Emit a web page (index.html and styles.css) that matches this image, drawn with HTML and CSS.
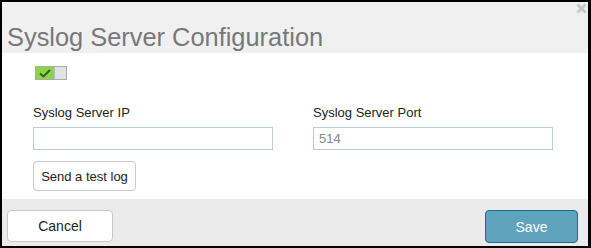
FILE: index.html
```html
<!DOCTYPE html>
<html>
<head>
  <link rel="stylesheet" href="styles.css">
</head>
<body class="body">
<div class="dialog">
  <div class="dialog-header">
    <span class="dialog-title">Syslog Server Configuration</span>
    <svg class="close" width="11" height="11" viewBox="0 0 11 11"><path d="M1.5 1.5 L9.5 9.5 M9.5 1.5 L1.5 9.5" stroke="#C8C8C8" stroke-width="3"/></svg>
  </div>
  <div class="dialog-body">
    <div class="toggle">
      <span class="toggle-on">
        <svg width="12" height="9" viewBox="0 0 12 9"><path d="M1 4.5 L4.5 7.5 L11 1" fill="none" stroke="#3a5a28" stroke-width="2"/></svg>
      </span>
      <span class="toggle-off"></span>
    </div>
    <div class="fields">
      <div class="field">
        <label class="label">Syslog Server IP</label>
        <input class="textbox" type="text">
      </div>
      <div class="field">
        <label class="label">Syslog Server Port</label>
        <input class="textbox" type="text" placeholder="514">
      </div>
    </div>
    <button class="btn btn-test">Send a test log</button>
  </div>
  <div class="dialog-footer">
    <button class="btn btn-cancel">Cancel</button>
    <button class="btn btn-save">Save</button>
  </div>
</div>
</body>
</html>
```

FILE: styles.css
```css
.body { margin:0; background:#FFFFFF; font-family:"Liberation Sans",Arial,sans-serif; color:#333333; }
.dialog { width:591px; height:248px; box-sizing:border-box; border:2px solid #000000; border-right-width:3px; display:flex; flex-direction:column; }
.dialog-header { position:relative; height:51px; box-sizing:border-box; padding:23px 0 0 5px; background:#F0F0F0; }
.dialog-title { font-size:25.4px; line-height:25px; color:#787878; }
.close { position:absolute; top:1px; right:1px; }
.dialog-body { flex:1; padding:13px 0 0 31px; }
.toggle { display:flex; width:30px; height:12px; margin-left:2px; border:1px solid #AAAAAA; }
.toggle-on { width:18px; background:#8CD44A; display:flex; align-items:center; justify-content:center; }
.toggle-off { flex:1; background:#E2E2E2; border-left:1px solid #BBBBBB; }
.fields { display:flex; gap:40px; margin-top:25px; }
.field { display:flex; flex-direction:column; width:240px; }
.label { font-size:13px; line-height:15px; color:#222222; margin-bottom:7px; }
.textbox { box-sizing:border-box; width:240px; height:23px; margin:0; border:1px solid #BBCCD2; padding:0 5px; font-family:inherit; font-size:13px; color:#555555; }
.textbox::placeholder { color:#888888; }
.btn { font-family:inherit; box-sizing:border-box; background:#FFFFFF; border:1px solid #C8C8C8; border-radius:4px; color:#222222; cursor:pointer; }
.btn-test { margin-top:11px; width:103px; height:30px; font-size:13px; padding:0; }
.dialog-footer { height:47px; box-sizing:border-box; background:#EBEBEB; display:flex; justify-content:space-between; align-items:flex-start; padding:11px 10px 0 5px; }
.btn-cancel { width:106px; height:32px; font-size:14px; }
.btn-save { width:93px; height:33px; font-size:14px; background:#5FA3BC; border-color:#1F6B8C; color:#FFFFFF; }
```
